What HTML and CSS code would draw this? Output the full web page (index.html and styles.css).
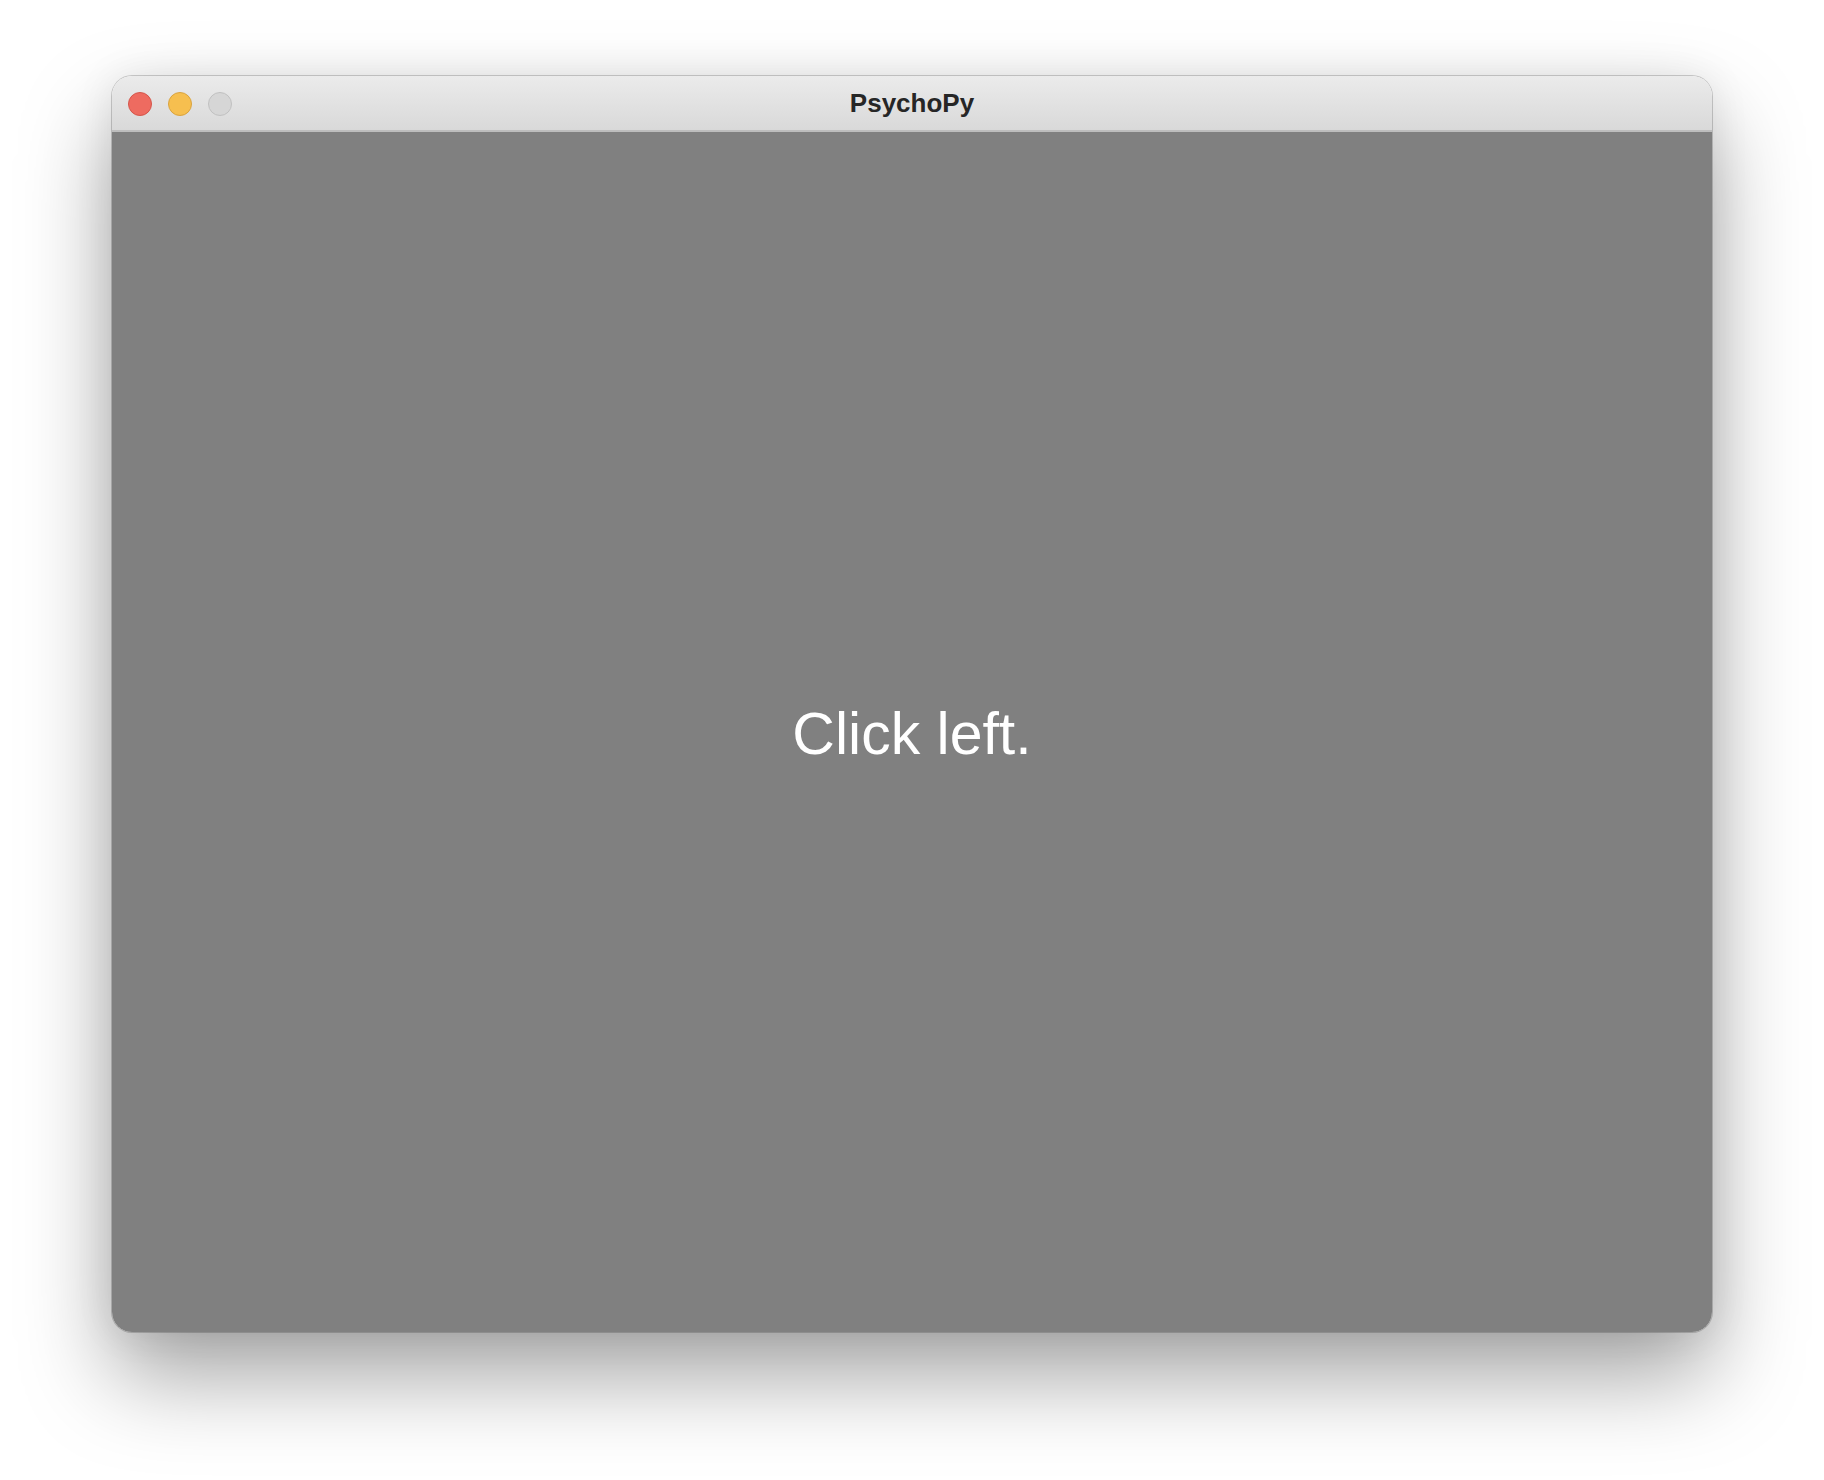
FILE: index.html
```html
<!DOCTYPE html>
<html>
<head>
<meta charset="utf-8">
<link rel="stylesheet" href="styles.css">
</head>
<body>
<div class="window">
  <div class="titlebar">
    <div class="lights">
      <span class="light close"></span>
      <span class="light min"></span>
      <span class="light zoom"></span>
    </div>
    <div class="title">PsychoPy</div>
  </div>
  <div class="content">
    <div class="stim">Click left.</div>
  </div>
</div>
</body>
</html>
```
FILE: styles.css
```css
html, body {
  margin: 0;
  padding: 0;
  background: #ffffff;
}
body {
  width: 1824px;
  height: 1480px;
  padding: 76px 0 0 112px;
  box-sizing: border-box;
  overflow: hidden;
}
.window {
  width: 1600px;
  height: 1256px;
  border-radius: 20px;
  overflow: hidden;
  display: flex;
  flex-direction: column;
  box-shadow: 0 0 0 1px rgba(0,0,0,0.18), 0 44px 90px rgba(0,0,0,0.36), 0 0 40px rgba(0,0,0,0.08);
}
.titlebar {
  height: 54px;
  flex: 0 0 54px;
  background: linear-gradient(#ebebeb, #d9d9d9);
  border-bottom: 2px solid #bdbdbd;
  display: flex;
  align-items: center;
  position: relative;
}
.lights {
  display: flex;
  gap: 16px;
  padding-left: 16px;
  padding-top: 2px;
}
.light {
  width: 24px;
  height: 24px;
  border-radius: 50%;
  box-sizing: border-box;
  display: block;
}
.close { background: #ee6b60; border: 1px solid #d4564b; }
.min { background: #f6bf4f; border: 1px solid #d9a33f; }
.zoom { background: #d6d6d6; border: 1px solid #c0c0c0; }
.title {
  position: absolute;
  left: 0;
  right: 0;
  top: 0;
  bottom: 0;
  display: flex;
  align-items: center;
  justify-content: center;
  font-family: "Liberation Sans", Arial, sans-serif;
  font-weight: bold;
  font-size: 26px;
  color: #262626;
  padding-top: 1px;
}
.content {
  flex: 1;
  background: #808080;
  display: flex;
  align-items: center;
  justify-content: center;
}
.stim {
  font-family: "Liberation Sans", Arial, sans-serif;
  font-size: 59px;
  color: #ffffff;
  margin-top: 4px;
  filter: blur(0.4px);
}
```
